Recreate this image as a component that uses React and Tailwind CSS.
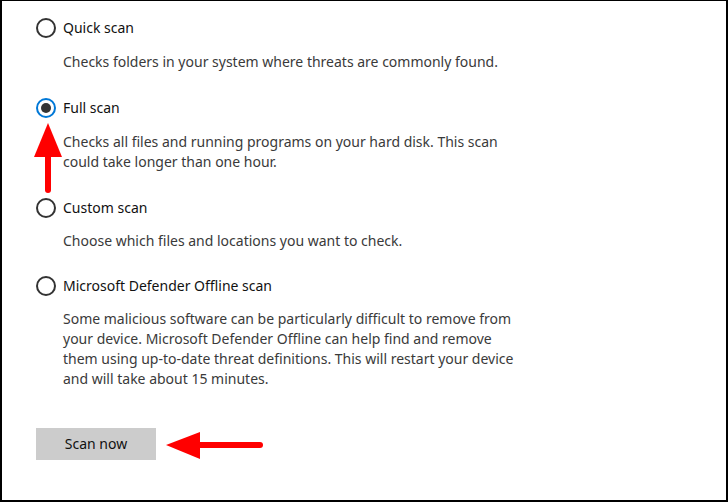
import React, { useState } from "react";

const options = [
  {
    id: "quick",
    label: "Quick scan",
    gap: "gap-[14px]",
    lines: ["Checks folders in your system where threats are commonly found."],
  },
  {
    id: "full",
    label: "Full scan",
    gap: "gap-[14px]",
    lines: [
      "Checks all files and running programs on your hard disk. This scan",
      "could take longer than one hour.",
    ],
  },
  {
    id: "custom",
    label: "Custom scan",
    gap: "gap-[13px]",
    lines: ["Choose which files and locations you want to check."],
  },
  {
    id: "offline",
    label: "Microsoft Defender Offline scan",
    gap: "gap-[13px]",
    lines: [
      "Some malicious software can be particularly difficult to remove from",
      "your device. Microsoft Defender Offline can help find and remove",
      "them using up-to-date threat definitions. This will restart your device",
      "and will take about 15 minutes.",
    ],
  },
];

const Radio = ({ checked }) =>
  checked ? (
    <span className="flex h-[20px] w-[20px] items-center justify-center rounded-full border-2 border-[#0078d7]">
      <span className="h-[10px] w-[10px] rounded-full bg-[#333]" />
    </span>
  ) : (
    <span className="h-[20px] w-[20px] rounded-full border-2 border-[#333]" />
  );

export default function App() {
  const [selected, setSelected] = useState("full");

  return (
    <div
      className="relative h-[502px] w-[728px] border-2 border-t border-black bg-white"
      style={{ fontFamily: '"Noto Sans", "Open Sans", sans-serif' }}
    >
      <div className="flex flex-col gap-[26px] pl-[34px] pt-[17px] text-[14px] leading-[20px]">
        {options.map((opt, idx) => (
          <div
            key={opt.id}
            className={`flex flex-col ${opt.gap} ${idx === 3 ? "-mt-[1px]" : ""}`}
          >
            <label
              className="flex cursor-pointer items-center gap-[7px] text-[#111]"
              onClick={() => setSelected(opt.id)}
            >
              <Radio checked={selected === opt.id} />
              <span>{opt.label}</span>
            </label>
            <p className="pl-[27px] text-[#3a3a3a]">
              {opt.lines.map((line, i) => (
                <span key={i} className="block whitespace-nowrap">
                  {line}
                </span>
              ))}
            </p>
          </div>
        ))}
        <div className="mt-[13px]">
          <button className="h-[32px] w-[120px] bg-[#cccccc] text-[14px] text-[#111]">
            Scan now
          </button>
        </div>
      </div>

      {/* annotation arrows */}
      <svg className="absolute left-0 top-0" width="728" height="502">
        <polygon points="46,122 32,156 60,156" fill="#ff0000" />
        <line x1="46" y1="150" x2="46" y2="189" stroke="#ff0000" strokeWidth="6" strokeLinecap="round" />
        <polygon points="164,444 198,431 198,458" fill="#ff0000" />
        <line x1="192" y1="444" x2="258" y2="444" stroke="#ff0000" strokeWidth="6" strokeLinecap="round" />
      </svg>
    </div>
  );
}
